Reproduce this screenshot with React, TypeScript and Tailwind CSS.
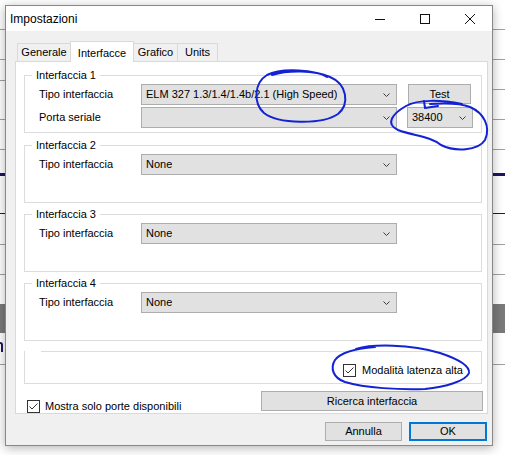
import React from 'react';

type Props = { className?: string; children?: React.ReactNode };

const Chevron = () => (
  <svg width="7" height="4" viewBox="0 0 7 4" className="shrink-0">
    <path d="M0.5 0.5L3.5 3.5L6.5 0.5" fill="none" stroke="#3c3c3c" strokeWidth="1" />
  </svg>
);

const Combo = ({ text, className }: { text?: string; className: string }) => (
  <div
    className={`flex h-[21px] shrink-0 items-center justify-between border border-[#adadad] bg-[#e1e1e1] pl-[4px] pr-[6px] ${className}`}
  >
    <span className="truncate">{text}</span>
    <Chevron />
  </div>
);

const Button = ({ className, children }: Props) => (
  <div className={`flex shrink-0 items-center justify-center border bg-[#e1e1e1] ${className}`}>
    {children}
  </div>
);

const CheckBox = () => (
  <div className="flex h-[13px] w-[13px] shrink-0 items-center justify-center border border-[#333] bg-white">
    <svg width="11" height="11" viewBox="0 0 11 11">
      <path d="M1.5 5.5L4 8L9.5 2.5" fill="none" stroke="#333" strokeWidth="1" />
    </svg>
  </div>
);

const Group = ({ title, className, children }: Props & { title: string }) => (
  <div className={`relative border border-[#dcdcdc] ${className}`}>
    {title ? (
      <span className="absolute -top-[7px] left-[7px] bg-white px-[4px] leading-[13px]">{title}</span>
    ) : (
      <span className="absolute -top-[2px] left-0 h-[3px] w-[16px] bg-white" />
    )}
    {children}
  </div>
);

const Row = ({ label, children }: Props & { label: string }) => (
  <div className="flex items-start">
    <div className="flex h-[21px] w-[102px] shrink-0 items-center">{label}</div>
    {children}
  </div>
);

const EmptyGroup = ({ title }: { title: string }) => (
  <Group title={title} className="ml-[8px] h-[58px] w-[458px] pl-[14px] pt-[8px]">
    <Row label="Tipo interfaccia">
      <Combo text="None" className="w-[256px]" />
    </Row>
  </Group>
);

const Tab = ({ label, active, className }: { label: string; active?: boolean; className: string }) =>
  active ? (
    <div
      className={`relative z-10 -mb-px flex h-[21px] items-start justify-center border border-b-0 border-[#d9d9d9] bg-white pt-[3px] ${className}`}
    >
      {label}
    </div>
  ) : (
    <div
      className={`flex h-[18px] items-center justify-center border border-b-0 border-[#d9d9d9] bg-[#f0f0f0] ${className}`}
    >
      {label}
    </div>
  );

// the application window peeking out on both sides of the dialog
const LeftStrip = () => (
  <div className="flex w-[6px] flex-col">
    <div className="mt-[29px] h-px bg-[#a0a0a0]" />
    <div className="mt-[29px] h-px bg-[#a0a0a0]" />
    <div className="mt-[20px] h-px bg-[#a0a0a0]" />
    <div className="mt-[38px] h-px bg-[#a0a0a0]" />
    <div className="mt-[29px] h-px bg-[#a0a0a0]" />
    <div className="mt-[23px] h-[3px] bg-[#1c1660]" />
    <div className="mt-[37px] h-px bg-[#222]" />
    <div className="mt-[30px] h-px bg-[#a0a0a0]" />
    <div className="mt-[29px] h-px bg-[#a0a0a0]" />
    <div className="mt-[29px] h-[29px] bg-[#7a7a7a]" />
    {/* tail of a letter cut by the dialog edge */}
    <div className="mt-[9px] h-[10px] w-[3px] rounded-tr-[3px] border-r-2 border-t-2 border-[#1c1660]" />
    <div className="mt-[12px] h-px bg-[#a0a0a0]" />
  </div>
);

const RightStrip = () => (
  <div className="flex w-[13px] flex-col">
    <div className="mt-[29px] h-px bg-[#a0a0a0]" />
    <div className="mt-[29px] h-px bg-[#a0a0a0]" />
    <div className="mt-[29px] h-px bg-[#a0a0a0]" />
    <div className="mt-[29px] h-px bg-[#a0a0a0]" />
    <div className="mt-[29px] h-px bg-[#a0a0a0]" />
    <div className="mt-[23px] h-[3px] bg-[#1c1660]" />
    <div className="mt-[37px] h-px bg-[#222]" />
    <div className="mt-[30px] h-px bg-[#a0a0a0]" />
    <div className="mt-[29px] h-px bg-[#a0a0a0]" />
    <div className="mt-[29px] h-[29px] bg-[#7a7a7a]" />
    <div className="mt-[31px] h-px bg-[#a0a0a0]" />
  </div>
);

// pen marks drawn over the dialog
const Scribbles = () => (
  <svg
    className="pointer-events-none absolute inset-0 z-30"
    width="505"
    height="455"
    viewBox="0 0 505 455"
    fill="none"
    stroke="#1422d4"
    strokeWidth="2"
    strokeLinecap="round"
    strokeLinejoin="round"
  >
    <path d="M327 77C316 70 282 67 267 75C254 83 253 103 264 113C278 124 322 125 338 114C350 104 347 84 330 77C314 70 288 70 272 75" />
    <path d="M424 101L425 108L438 106" />
    <path d="M462 104C442 100 418 99 406 106C392 114 385 124 398 130C414 136 430 136 441 145C455 152 478 151 485 140C491 127 484 113 470 107C460 103 445 103 430 104" />
    <path d="M356 349C372 344 410 344 440 353C458 359 470 366 469 373C466 381 445 387 425 389C400 390 365 388 345 382C333 378 330 368 335 360C340 353 352 349 375 347" />
  </svg>
);

const App = () => {
  return (
    <div className="relative h-[455px] w-[505px] overflow-hidden bg-white font-['Liberation_Sans',Arial,sans-serif] text-[11px] text-black">
      <div className="absolute inset-0 flex justify-between">
        <LeftStrip />
        <RightStrip />
      </div>

      <div className="absolute left-[5px] top-[5px] flex h-[441px] w-[488px] flex-col border border-[#888] bg-[#f0f0f0] shadow-[0_2px_10px_rgba(0,0,0,0.3)]">
        {/* caption */}
        <div className="flex h-[25px] shrink-0 items-center bg-white">
          <span className="flex-1 pl-[4px] text-[12px]">Impostazioni</span>
          <div className="flex h-full w-[45px] items-center justify-center">
            <svg width="10" height="10" viewBox="0 0 10 10">
              <path d="M0 5.5H10" stroke="#111" strokeWidth="1" />
            </svg>
          </div>
          <div className="flex h-full w-[45px] items-center justify-center">
            <svg width="10" height="10" viewBox="0 0 10 10">
              <rect x="0.5" y="0.5" width="9" height="9" fill="none" stroke="#111" strokeWidth="1" />
            </svg>
          </div>
          <div className="flex h-full w-[45px] items-center justify-center">
            <svg width="10" height="10" viewBox="0 0 10 10">
              <path d="M0 0L10 10M10 0L0 10" stroke="#111" strokeWidth="1" />
            </svg>
          </div>
        </div>

        {/* tabs */}
        <div className="ml-[11px] mt-[10px] flex h-[20px] items-end">
          <Tab label="Generale" className="w-[54px]" />
          <Tab label="Interfacce" active className="-ml-px w-[64px]" />
          <Tab label="Grafico" className="-ml-px w-[45px]" />
          <Tab label="Units" className="-ml-px w-[41px]" />
        </div>

        <div className="ml-[9px] h-[353px] w-[473px] border border-[#d9d9d9] bg-white">
          <Group title="Interfaccia 1" className="ml-[8px] mt-[13px] h-[58px] w-[458px] pl-[14px] pt-[8px]">
            <Row label="Tipo interfaccia">
              <Combo text="ELM 327 1.3/1.4/1.4b/2.1 (High Speed)" className="w-[256px]" />
              <Button className="ml-[11px] h-[20px] w-[63px] border-[#adadad]">Test</Button>
            </Row>
            <div className="mt-[2px]">
              <Row label="Porta seriale">
                <Combo className="w-[256px]" />
                <Combo text="38400" className="ml-[10px] w-[66px]" />
              </Row>
            </div>
          </Group>

          <div className="mt-[12px]">
            <EmptyGroup title="Interfaccia 2" />
          </div>
          <div className="mt-[11px]">
            <EmptyGroup title="Interfaccia 3" />
          </div>
          <div className="mt-[11px]">
            <EmptyGroup title="Interfaccia 4" />
          </div>

          <Group title="" className="ml-[8px] mt-[10px] h-[33px] w-[458px] pl-[318px] pt-[10px]">
            <div className="flex items-center gap-[6px]">
              <CheckBox />
              <span>Modalità latenza alta</span>
            </div>
          </Group>

          <div className="ml-[11px] mt-[7px] flex items-start">
            <div className="mt-[7px] flex w-[234px] items-center gap-[5px]">
              <CheckBox />
              <span>Mostra solo porte disponibili</span>
            </div>
            <Button className="h-[20px] w-[222px] border-[#adadad]">Ricerca interfaccia</Button>
          </div>
        </div>

        <div className="mr-[5px] mt-[8px] flex justify-end">
          <Button className="h-[19px] w-[77px] border-[#adadad]">Annulla</Button>
          <Button className="ml-[7px] h-[19px] w-[78px] border-2 border-[#0078d7]">OK</Button>
        </div>
      </div>

      <Scribbles />
    </div>
  );
};

export default App;
